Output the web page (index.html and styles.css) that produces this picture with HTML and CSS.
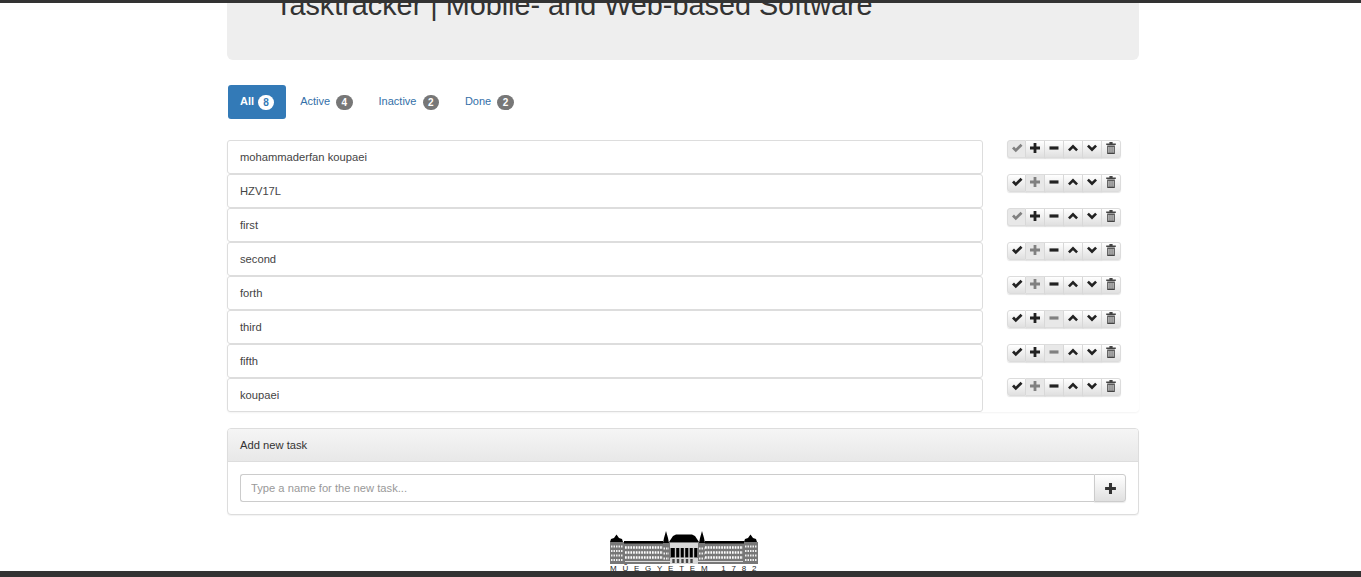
FILE: index.html
```html
<!DOCTYPE html>
<html>
<head>
    <title>Tasktracker</title>
    <meta charset="UTF-8">
    <link rel="stylesheet" href="styles.css">
</head>
<body>

<svg class="defs" width="0" height="0">
    <symbol id="i-ok" viewBox="0 0 12 12"><path d="M1 6.5 L3 4.6 L4.8 6.4 L9.6 1.8 L11.5 3.7 L4.8 10.2 Z"/></symbol>
    <symbol id="i-plus" viewBox="0 0 12 12"><path d="M4.6 1 H7.4 V4.6 H11 V7.4 H7.4 V11 H4.6 V7.4 H1 V4.6 H4.6 Z"/></symbol>
    <symbol id="i-minus" viewBox="0 0 12 12"><path d="M1.5 4.4 H10.5 V7.6 H1.5 Z"/></symbol>
    <symbol id="i-up" viewBox="0 0 12 12"><path d="M6 2.6 L11 7.4 L9.2 9.2 L6 6.2 L2.8 9.2 L1 7.4 Z"/></symbol>
    <symbol id="i-down" viewBox="0 0 12 12"><path d="M6 9.4 L11 4.6 L9.2 2.8 L6 5.8 L2.8 2.8 L1 4.6 Z"/></symbol>
    <symbol id="i-trash" viewBox="0 0 12 12"><path d="M4.4 0 H7.6 V1.4 H10.8 V3 H1.2 V1.4 H4.4 Z M2.2 3.6 H9.8 V12 H2.2 Z M3.4 4.8 V10.8 H4.5 V4.8 Z M5.45 4.8 V10.8 H6.55 V4.8 Z M7.5 4.8 V10.8 H8.6 V4.8 Z" fill-rule="evenodd"/></symbol>
</svg>

<div class="topbar"></div>

<div class="container">
    <div class="jumbotron">
        <h1>Tasktracker | Mobile- and Web-based Software</h1>
    </div>

    <ul class="pills">
        <li class="active"><a>All <span class="badge">8</span></a></li>
        <li><a>Active <span class="badge">4</span></a></li>
        <li><a>Inactive <span class="badge">2</span></a></li>
        <li><a>Done <span class="badge">2</span></a></li>
    </ul>

    <div class="tasks">
        <div class="task-list">
            <div class="task">mohammaderfan koupaei</div>
            <div class="task">HZV17L</div>
            <div class="task">first</div>
            <div class="task">second</div>
            <div class="task">forth</div>
            <div class="task">third</div>
            <div class="task">fifth</div>
            <div class="task">koupaei</div>
        </div>
        <div class="task-actions" id="actions"></div>
    </div>

    <div class="panel">
        <div class="panel-heading">Add new task</div>
        <div class="panel-body">
            <div class="input-group">
                <input class="task-input" type="text" placeholder="Type a name for the new task...">
                <button class="add-btn"><svg class="add-icon"><use href="#i-plus"/></svg></button>
            </div>
        </div>
    </div>

    <div class="logo">
        <svg class="logo-building" width="148" height="33" viewBox="0 0 148 33">
            <!-- walls -->
            <rect class="logo-wall" x="0" y="11" width="148" height="22"/>
            <!-- wing windows -->
            <path class="logo-row" d="M15 16.5 H53 M95 16.5 H133 M15 21.5 H53 M95 21.5 H133 M15 26.5 H53 M95 26.5 H133"/>
            <path class="logo-tower" d="M1 15.5 H13 M135 15.5 H147 M1 20 H13 M135 20 H147 M1 24.5 H13 M135 24.5 H147 M1 29 H13 M135 29 H147 M53.5 17.5 H59 M89 17.5 H94.5 M53.5 22.5 H59 M89 22.5 H94.5 M53.5 27.5 H59 M89 27.5 H94.5"/>
            <path class="logo-band" d="M15 30.5 H133"/>
            <!-- roofs -->
            <path d="M0 11 L1 8 L4 7 L6.5 3.5 L9 7 L12 8 L13 11 Z M14 10 H53 V12.5 H14 Z M95 10 H134 V12.5 H95 Z M134 11 L135 8 L138 7 L140.5 3.5 L143 7 L146 8 L147 11 Z"/>
            <path d="M53 12 L54 7 L56 0 L58 7 L59 12 Z M89 12 L90 7 L92 0 L94 7 L95 12 Z M59 11 L63 5 L66 3.5 L82 3.5 L85 5 L89 11 Z"/>
            <!-- centre block -->
            <rect class="logo-light" x="60" y="12" width="28" height="5"/>
            <path d="M61 17 H87 V26 H61 Z"/>
            <path class="logo-arch" d="M65.5 17 V27 M70 17 V27 M74.5 17 V27 M79 17 V27 M83.5 17 V27"/>
            <rect class="logo-light" x="60" y="27" width="28" height="6"/>
            <path class="logo-door" d="M63.5 28 V32 M68 28 V32 M72.5 28 V32 M77 28 V32 M81.5 28 V32"/>
        </svg>
        <div class="logo-text">MŰEGYETEM 1782</div>
    </div>
</div>

<div class="bottombar"></div>

<script>
    // disabled buttons per row: 0 ok, 1 plus, 2 minus
    var disabled = [0, 1, 0, 1, 1, 2, 2, 1];
    var icons = ["ok", "plus", "minus", "up", "down", "trash"];
    var html = "";
    for (var r = 0; r < disabled.length; r++){
        html += '<div class="btn-group">';
        for (var i = 0; i < icons.length; i++){
            html += '<button class="btn' + (disabled[r] === i ? ' off' : '') + '"><svg class="icon"><use href="#i-' + icons[i] + '"/></svg></button>';
        }
        html += '</div>';
    }
    document.getElementById("actions").innerHTML = html;
</script>

</body>
</html>
```

FILE: styles.css
```css
html {
    box-sizing: border-box;
}
*, *:before, *:after {
    box-sizing: inherit;
}

body{
    margin: 0;
    height: 577px;
    overflow: hidden;
    font-family: "Liberation Sans", Arial, Helvetica, sans-serif;
    font-size: 11.2px;
    color: #333;
    background-color: #fff;
}

.defs{
    position: absolute;
}

.topbar{
    position: absolute;
    top: 0;
    left: 0;
    right: 0;
    height: 3px;
    background-color: #333;
}

.bottombar{
    position: absolute;
    left: 0;
    right: 0;
    bottom: 0;
    height: 6px;
    background-color: #333;
}

.container{
    width: 912px;
    margin: 0 0 0 227px;
}

.jumbotron{
    height: 60px;
    padding-left: 48px;
    background-color: #eee;
    border-radius: 0 0 6px 6px;
    overflow: hidden;
}

.jumbotron h1{
    margin: -10px 0 0 0;
    font-size: 28.8px;
    font-weight: 400;
    line-height: 31px;
    white-space: nowrap;
}

.pills{
    display: flex;
    gap: 2px;
    list-style: none;
    margin: 25px 0 21px 1px;
    padding: 0;
}

.pills a{
    display: block;
    height: 34px;
    padding: 0 12px;
    line-height: 33px;
    font-size: 11px;
    color: #336fa8;
    border-radius: 3px;
}

.pills .active a{
    color: #fff;
    font-weight: 700;
    background-color: #337ab7;
}

.badge{
    display: inline-block;
    min-width: 16.4px;
    height: 15px;
    margin-left: 3px;
    padding: 0 3px;
    font-size: 10px;
    font-weight: 700;
    line-height: 15px;
    text-align: center;
    vertical-align: -1px;
    color: #fff;
    background-color: #777;
    border-radius: 8px;
}

.pills .active .badge{
    margin-left: 1px;
    min-width: 16px;
    color: #337ab7;
    background-color: #fff;
}

.tasks{
    display: flex;
    height: 272px;
    border-radius: 4px;
    box-shadow: 0 1px 2px rgba(0, 0, 0, 0.05);
}

.task-list{
    width: 756px;
}

.task{
    height: 34px;
    padding-left: 12px;
    line-height: 33px;
    color: #444;
    background-color: #fff;
    border: 1px solid #ddd;
    border-radius: 3px;
}

.task-actions{
    flex: 1;
    padding-left: 24px;
}

.btn-group{
    display: flex;
    height: 34px;
    align-items: flex-start;
}

.btn{
    display: flex;
    align-items: center;
    justify-content: center;
    width: 19px;
    height: 18px;
    padding: 0 0 2px 0;
    background: linear-gradient(#fff, #e0e0e0);
    border: 1px solid #dcdcdc;
    border-left-width: 0;
    box-shadow: 0 1px 1px rgba(0, 0, 0, 0.1);
    color: #222;
}

.btn:first-child{
    border-left-width: 1px;
    border-radius: 3px 0 0 3px;
}

.btn:last-child{
    border-radius: 0 3px 3px 0;
    color: #444;
}

.btn.off{
    color: #808080;
    background: #e8e8e8;
}

.icon{
    width: 12px;
    height: 12px;
    fill: currentColor;
}

.panel{
    margin-top: 16px;
    background-color: #fff;
    border: 1px solid #ddd;
    border-radius: 4px;
    box-shadow: 0 1px 1px rgba(0, 0, 0, 0.05);
}

.panel-heading{
    height: 33px;
    padding-left: 12px;
    line-height: 32px;
    color: #333;
    background: linear-gradient(#f5f5f5, #e8e8e8);
    border-bottom: 1px solid #ddd;
    border-radius: 3px 3px 0 0;
}

.panel-body{
    padding: 12px;
}

.input-group{
    display: flex;
    height: 28px;
}

.task-input{
    flex: 1;
    height: 28px;
    padding: 0 10px;
    font-family: inherit;
    font-size: 11.2px;
    color: #555;
    border: 1px solid #ccc;
    border-right-width: 0;
    border-radius: 3px 0 0 3px;
    outline: none;
}

.task-input::placeholder{
    color: #999;
}

.add-btn{
    display: flex;
    align-items: center;
    justify-content: center;
    width: 32px;
    height: 28px;
    padding: 0;
    color: #333;
    background: linear-gradient(#fff, #e0e0e0);
    border: 1px solid #ccc;
    box-shadow: 0 1px 1px rgba(0, 0, 0, 0.08);
    border-radius: 0 3px 3px 0;
}

.add-icon{
    width: 13px;
    height: 13px;
    fill: currentColor;
}

.logo{
    width: 150px;
    margin: 16px 0 0 383px;
}

.logo-building{
    display: block;
}

.logo-wall{
    fill: #777;
}

.logo-row{
    stroke: #fff;
    stroke-width: 2.6;
    stroke-dasharray: 1.7 1;
    fill: none;
}

.logo-tower{
    stroke: #eee;
    stroke-width: 1.8;
    stroke-dasharray: 1.5 1;
    fill: none;
}

.logo-band{
    stroke: #ddd;
    stroke-width: 1;
    fill: none;
}

.logo-light{
    fill: #d8d8d8;
}

.logo-arch{
    stroke: #ccc;
    stroke-width: 1.4;
}

.logo-door{
    stroke: #444;
    stroke-width: 2.4;
    fill: none;
}

.logo-text{
    margin-top: 0;
    font-size: 8px;
    line-height: 9px;
    letter-spacing: 5.75px;
    white-space: nowrap;
    color: #222;
}
```
